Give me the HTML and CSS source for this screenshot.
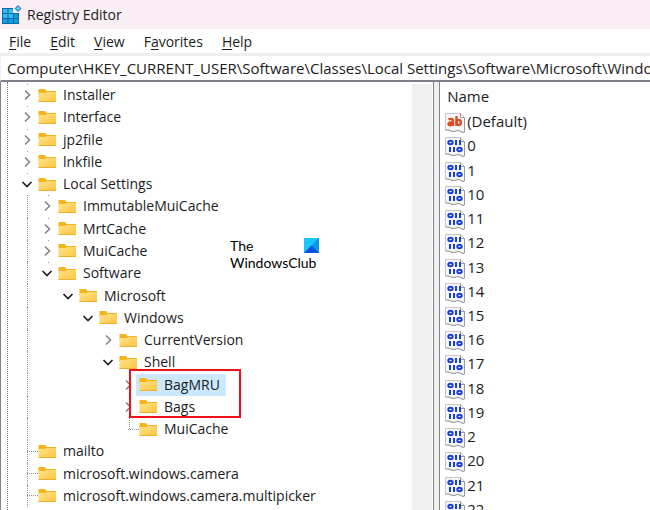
FILE: index.html
```
<!DOCTYPE html>
<html lang="en">
<head>
<meta charset="utf-8">
<meta name="viewport" content="width=device-width, initial-scale=1">
<title>Registry Editor</title>
<link rel="stylesheet" href="styles.css">
</head>
<body>
<svg class="sprites" aria-hidden="true">
  <defs>
    <linearGradient id="gold" x1="0" y1="0" x2="1" y2="1"><stop offset="0" stop-color="#ffe48e"/><stop offset="1" stop-color="#fcc43c"/></linearGradient>
    <symbol id="folder" viewBox="0 0 19 15"><path d="M.5 1h6.500l1.500 2h9.500v4H.5z" fill="#f5b41c"/><path d="M.5 5H7l2-1h9v10H.5z" fill="url(#gold)"/><path d="M.5 13.500h17.500" stroke="#eeb030"/></symbol>
    <symbol id="closed" viewBox="0 0 12 12"><path d="M4 1.500l4.500 4.500L4 10.500" fill="none" stroke="#858585" stroke-width="1.600"/></symbol>
    <symbol id="open" viewBox="0 0 12 12"><path d="M1.500 4L6 8.500 10.500 4" fill="none" stroke="#222" stroke-width="1.700"/></symbol>
    <symbol id="page" viewBox="0 0 20 20"><path d="M.5.5h15l4 4v14.500c-2 .8-3-.2-5-1.200-2.500-1.300-4 1.200-6.500.7-3-.5-4-2.200-7.500-1.500z" fill="#f7f7f9" stroke="#c6c6ca"/><path d="M15.500.5v4h4M19.500 4.500v14.500c-2 .8-3-.2-5-1.200-2.500-1.300-4 1.200-6.500.7-3-.5-4-2.200-7.500-1.500" fill="none" stroke="#999"/></symbol>
    <symbol id="binary" viewBox="0 0 20 20"><use href="#page"/><g fill="none" stroke="#1740d8" stroke-width="2"><ellipse cx="5.500" cy="5.500" rx="2.200" ry="1.700"/><path d="M11 3v5M15 3v5M5 10v5M9 10v5"/><ellipse cx="14.500" cy="12.500" rx="2.200" ry="1.700"/></g></symbol>
    <symbol id="string" viewBox="0 0 20 20"><use href="#page"/><g fill="none" stroke="#e04a20" stroke-width="2.400"><path d="M3.500 6.500c2-1 4.500-.8 4.500 1V13M8 9.300c-3-.2-4.500.5-4.500 1.700 0 1.800 3.500 1.500 4.500-.3M11.500 3v10"/><ellipse cx="13.700" cy="9.500" rx="2.200" ry="2.500"/></g></symbol>
  </defs>
</svg>
<div class="window">
  <header class="titlebar">
    <svg class="app-icon" viewBox="0 0 20 20" aria-hidden="true"><path d="M0 3h11v5h6v11H0z" fill="#086ba5"/><path fill="#35bdf0" d="M1 4h4.500v4H1zM6.500 4H11v4H6.500zM1 9h4.500v4H1zM6.500 9H11v4H6.500z"/><path fill="#169bdc" d="M12 9h4v4h-4zM1 14h4.500v4H1zM6.500 14H11v4H6.500zM12 14h4v4h-4z"/><path d="M16 0l3.500 3.500L16 7l-3.500-3.500z" fill="#2583b8"/><path d="M16 1.500l2 2-2 2-2-2z" fill="#74d4f5"/></svg>
    <h1>Registry Editor</h1>
  </header>
  <nav class="menubar" aria-label="Menu">
    <button type="button"><u>F</u>ile</button>
    <button type="button"><u>E</u>dit</button>
    <button type="button"><u>V</u>iew</button>
    <button type="button">F<u>a</u>vorites</button>
    <button type="button"><u>H</u>elp</button>
  </nav>
  <input class="address" type="text" aria-label="Address" value="Computer\HKEY_CURRENT_USER\Software\Classes\Local Settings\Software\Microsoft\Windows">
  <main class="panes">
    <section class="tree-pane" aria-label="Keys">
      <ul class="tree" role="tree">
        <li class="l0" role="treeitem"><svg class="twig"><use href="#closed"/></svg><svg class="folder"><use href="#folder"/></svg><span>Installer</span></li>
        <li class="l0" role="treeitem"><svg class="twig"><use href="#closed"/></svg><svg class="folder"><use href="#folder"/></svg><span>Interface</span></li>
        <li class="l0" role="treeitem"><svg class="twig"><use href="#closed"/></svg><svg class="folder"><use href="#folder"/></svg><span>jp2file</span></li>
        <li class="l0" role="treeitem"><svg class="twig"><use href="#closed"/></svg><svg class="folder"><use href="#folder"/></svg><span>lnkfile</span></li>
        <li class="l0" role="treeitem"><svg class="twig"><use href="#open"/></svg><svg class="folder"><use href="#folder"/></svg><span>Local Settings</span></li>
        <li class="l1 trunk" role="treeitem"><svg class="twig"><use href="#closed"/></svg><svg class="folder"><use href="#folder"/></svg><span>ImmutableMuiCache</span></li>
        <li class="l1 trunk" role="treeitem"><svg class="twig"><use href="#closed"/></svg><svg class="folder"><use href="#folder"/></svg><span>MrtCache</span></li>
        <li class="l1 trunk" role="treeitem"><svg class="twig"><use href="#closed"/></svg><svg class="folder"><use href="#folder"/></svg><span>MuiCache</span></li>
        <li class="l1 trunk" role="treeitem"><svg class="twig"><use href="#open"/></svg><svg class="folder"><use href="#folder"/></svg><span>Software</span></li>
        <li class="l2 trunk" role="treeitem"><svg class="twig"><use href="#open"/></svg><svg class="folder"><use href="#folder"/></svg><span>Microsoft</span></li>
        <li class="l3 trunk" role="treeitem"><svg class="twig"><use href="#open"/></svg><svg class="folder"><use href="#folder"/></svg><span>Windows</span></li>
        <li class="l4 trunk" role="treeitem"><svg class="twig"><use href="#closed"/></svg><svg class="folder"><use href="#folder"/></svg><span>CurrentVersion</span></li>
        <li class="l4 trunk" role="treeitem"><svg class="twig"><use href="#open"/></svg><svg class="folder"><use href="#folder"/></svg><span>Shell</span></li>
        <li class="l5 trunk marked" role="treeitem"><svg class="twig"><use href="#closed"/></svg><span class="selected"><svg class="folder"><use href="#folder"/></svg><span>BagMRU</span></span></li>
        <li class="l5 trunk" role="treeitem"><svg class="twig"><use href="#closed"/></svg><svg class="folder"><use href="#folder"/></svg><span>Bags</span></li>
        <li class="l5 trunk leaf last" role="treeitem"><i class="twig"></i><svg class="folder"><use href="#folder"/></svg><span>MuiCache</span></li>
        <li class="l0 leaf" role="treeitem"><i class="twig"></i><svg class="folder"><use href="#folder"/></svg><span>mailto</span></li>
        <li class="l0 leaf" role="treeitem"><i class="twig"></i><svg class="folder"><use href="#folder"/></svg><span>microsoft.windows.camera</span></li>
        <li class="l0 leaf" role="treeitem"><i class="twig"></i><svg class="folder"><use href="#folder"/></svg><span>microsoft.windows.camera.multipicker</span></li>
      </ul>
      <div class="scrollbar"></div>
      <div class="watermark">
        <div>The</div>
        <div>WindowsClub</div>
        <svg viewBox="0 0 15 15" aria-hidden="true"><path fill="#1ac6fa" d="M0 0h15v15H0z"/><path fill="#0c93ec" d="M15 0v15H0z"/><path fill="#0b52d8" d="M7.500 7.500L15 15H0z"/></svg>
      </div>
    </section>
    <div class="splitter"></div>
    <section class="values-pane" aria-label="Values">
      <table class="values">
        <thead><tr><th scope="col">Name</th></tr></thead>
        <tbody>
          <tr><td><svg><use href="#string"/></svg>(Default)</td></tr>
          <tr><td><svg><use href="#binary"/></svg>0</td></tr>
          <tr><td><svg><use href="#binary"/></svg>1</td></tr>
          <tr><td><svg><use href="#binary"/></svg>10</td></tr>
          <tr><td><svg><use href="#binary"/></svg>11</td></tr>
          <tr><td><svg><use href="#binary"/></svg>12</td></tr>
          <tr><td><svg><use href="#binary"/></svg>13</td></tr>
          <tr><td><svg><use href="#binary"/></svg>14</td></tr>
          <tr><td><svg><use href="#binary"/></svg>15</td></tr>
          <tr><td><svg><use href="#binary"/></svg>16</td></tr>
          <tr><td><svg><use href="#binary"/></svg>17</td></tr>
          <tr><td><svg><use href="#binary"/></svg>18</td></tr>
          <tr><td><svg><use href="#binary"/></svg>19</td></tr>
          <tr><td><svg><use href="#binary"/></svg>2</td></tr>
          <tr><td><svg><use href="#binary"/></svg>20</td></tr>
          <tr><td><svg><use href="#binary"/></svg>21</td></tr>
          <tr><td><svg><use href="#binary"/></svg>22</td></tr>
        </tbody>
      </table>
    </section>
  </main>
</div>
</body>
</html>
```
FILE: styles.css
```
*, *::before, *::after { box-sizing: border-box; }
body { margin: 0; font-family: "Open Sans", "Noto Sans", sans-serif; font-size: 14px; line-height: 20px; color: #1c1c1c; }
.sprites { position: absolute; width: 0; height: 0; }
.window { display: flex; flex-direction: column; height: 100vh; overflow: hidden; background: #fff; }

.titlebar { display: flex; flex: none; align-items: center; gap: 5px; height: 29px; padding-left: 2px; background: #f8eef4; }
.app-icon { width: 20px; height: 20px; }
h1 { margin: 0; font-size: 14px; font-weight: 400; }

.menubar { display: flex; flex: none; gap: 19px; height: 27px; padding: 3px 9px 1px; border-bottom: 3px solid #efefef; }
.menubar button { padding: 0; border: 0; background: none; font: inherit; color: inherit; }
.menubar u { text-underline-offset: 2px; text-decoration-thickness: 1px; }

.address { flex: none; width: 100%; height: 26px; padding: 0 0 0 6px; border: solid #efefef; border-width: 0 0 0 1px; border-bottom: 2px solid #7e7e86; font: inherit; font-size: 15px; color: inherit; outline: 0; }

.panes { display: grid; flex: 1; grid-template-columns: 35fr 5px 17fr; min-height: 0; }
.tree-pane { position: relative; display: flex; min-width: 0; border: solid #82828c; border-width: 0 1px; }
.scrollbar { width: 20px; margin: 2px 1px 0 0; background: #f0f0f0; }
.tree { display: flex; flex: 1; flex-direction: column; margin: 0 0 0 6px; padding: 2px 0 3px; border-left: 1px dotted #777; list-style: none; }
.tree li { position: relative; display: flex; flex: 1; align-items: center; white-space: nowrap; }
.l0 { padding-left: 13px; }
.l1 { padding-left: 33px; }
.l2 { padding-left: 54px; }
.l3 { padding-left: 74px; }
.l4 { padding-left: 94px; }
.l5 { padding-left: 114px; }
.twig { flex: none; width: 12px; height: 12px; margin-right: 5px; }
.folder { flex: none; width: 19px; height: 15px; margin-right: 6px; }

/* Dotted connector for rows nested below an expanded top-level key */
.trunk::before, .l0::before { content: ""; position: absolute; left: 19px; top: 0; bottom: 0; border-left: 1px dotted #999; }
.l0:not(.leaf)::before, .l1::after { height: 1px; background: #999; border: 0; width: 1px; }
.l1::after { content: ""; position: absolute; left: 40px; top: 0; }
.leaf .twig { width: 11px; height: 1px; margin: 0 0 0 6px; border-top: 1px dotted #888; }
.last::after { content: ""; position: absolute; left: 121px; top: 0; height: 50%; border-left: 1px dotted #888; }

.selected { display: flex; align-items: center; height: 22px; margin-left: -3px; padding: 0 6px 0 3px; background: #cce8ff; }
.marked::after { content: ""; position: absolute; z-index: 1; left: 121px; top: -4px; width: 112px; height: 49px; border: 2px solid #f01018; }

.watermark { position: absolute; left: 229px; top: 155px; padding-right: 3px; font-family: Lato, sans-serif; line-height: 17px; color: #000; }
.watermark svg { position: absolute; top: 1px; right: 0; width: 15px; height: 15px; }

.splitter { background: #f0f0f0; }
.values-pane { min-width: 0; border-left: 1px solid #82828c; font-size: 15px; }
.values { width: 100%; height: calc(100% + 12px); border-collapse: collapse; }
.values th { height: 28px; padding: 0 0 0 7px; font-weight: 400; text-align: left; }
.values td { padding: 0 0 0 5px; }
.values svg { width: 20px; height: 20px; margin-right: 2px; vertical-align: middle; }
```
